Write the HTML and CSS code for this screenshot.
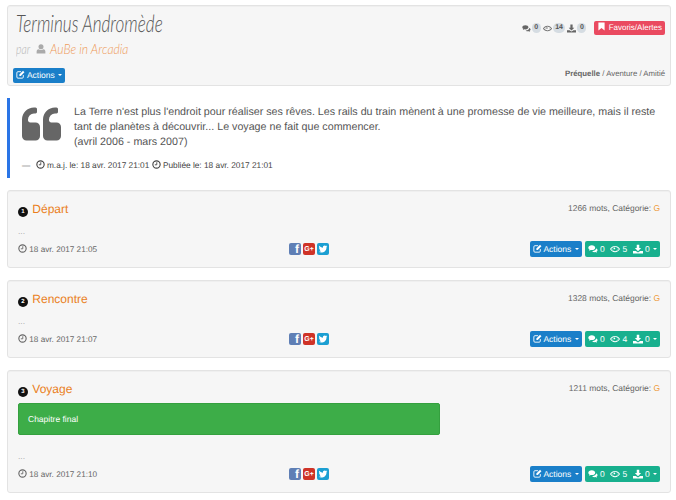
FILE: index.html
```html
<!DOCTYPE html>
<html lang="fr">

<head>
    <meta charset="UTF-8">
    <meta name="viewport" content="width=device-width, initial-scale=1.0">
    <title>Terminus Andromède</title>
    <link rel="stylesheet" href="styles.css">
</head>

<body>
    <!-- icones -->
    <svg class="sprite" xmlns="http://www.w3.org/2000/svg">
        <symbol id="i-edit" viewBox="0 0 16 16">
            <path d="M13 9v3.500a2 2 0 0 1-2 2H3.500a2 2 0 0 1-2-2V5a2 2 0 0 1 2-2H9" fill="none" stroke="currentColor" stroke-width="1.600" />
            <path d="M6 8l6.500-6.500 2.500 2.500L8.500 10.500H6z" fill="currentColor" />
        </symbol>
        <symbol id="i-comments" viewBox="0 0 16 16">
            <path d="M6 2C2.900 2 .5 3.700 .5 5.800c0 1.200.8 2.300 2 3-.2.700-.6 1.300-1 1.700 1 0 2-.4 2.800-1 .5.100 1.100.2 1.700.2 3.100 0 5.500-1.700 5.500-3.900S9.100 2 6 2z" fill="currentColor" />
            <path d="M13 6.500c.1 2.900-3 5.100-6.500 4.900.9 1 2.400 1.600 4 1.600.5 0 1-.1 1.400-.2.700.5 1.600.9 2.600.9-.4-.4-.7-.9-.9-1.500 1-.6 1.700-1.500 1.700-2.500 0-1.100-.9-2.100-2.300-2.700z" fill="currentColor" />
        </symbol>
        <symbol id="i-eye" viewBox="0 0 16 16">
            <path fill-rule="evenodd" d="M0 8c1.700-3 4.600-5 8-5s6.300 2 8 5c-1.700 3-4.600 5-8 5S1.700 11 0 8zm8-3.500a3.500 3.500 0 1 0 0 7 3.500 3.500 0 0 0 0-7zM1.800 8c1 1.400 2.200 2.400 3.500 3A4.800 4.800 0 0 1 5.300 5C4 5.600 2.800 6.600 1.800 8zm12.400 0c-1-1.400-2.200-2.400-3.500-3a4.800 4.800 0 0 1 0 6c1.300-.6 2.500-1.600 3.500-3z" fill="currentColor" />
            <circle cx="7" cy="7" r="1.400" fill="currentColor" />
        </symbol>
        <symbol id="i-download" viewBox="0 0 16 16">
            <path d="M6 1h4v5.500h3L8 11.500 3 6.500h3z" fill="currentColor" />
            <path d="M0 11h4.500L8 13.500 11.500 11H16v4H0z" fill="currentColor" />
        </symbol>
        <symbol id="i-user" viewBox="0 0 16 16">
            <circle cx="8" cy="4.500" r="4" fill="currentColor" />
            <path d="M1 15v-3c0-2 1.200-3.500 3-3.800 1 .9 2.500 1.300 4 1.300s3-.4 4-1.300c1.800.3 3 1.800 3 3.800v3z" fill="currentColor" />
        </symbol>
        <symbol id="i-bookmark" viewBox="0 0 16 16">
            <path d="M2.500 1h11v14L8 10.500 2.500 15z" fill="currentColor" />
        </symbol>
        <symbol id="i-clock" viewBox="0 0 16 16">
            <circle cx="8" cy="8" r="6.500" fill="none" stroke="currentColor" stroke-width="2" />
            <path d="M8.500 4v4.500H5" fill="none" stroke="currentColor" stroke-width="1.600" />
        </symbol>
        <symbol id="i-quote" viewBox="0 0 1664 1408">
            <path d="M768 832v384q0 80-56 136t-136 56h-384q-80 0-136-56t-56-136v-704q0-104 40.500-198.500t109.500-163.500 163.500-109.500 198.500-40.500h64q26 0 45 19t19 45v128q0 26-19 45t-45 19h-64q-106 0-181 75t-75 181v32q0 40 28 68t68 28h224q80 0 136 56t56 136zm896 0v384q0 80-56 136t-136 56h-384q-80 0-136-56t-56-136v-704q0-104 40.500-198.500t109.500-163.500 163.500-109.500 198.500-40.500h64q26 0 45 19t19 45v128q0 26-19 45t-45 19h-64q-106 0-181 75t-75 181v32q0 40 28 68t68 28h224q80 0 136 56t56 136z" fill="currentColor" />
        </symbol>
        <symbol id="i-twitter" viewBox="0 0 1792 1792">
            <path d="M1684 408q-67 98-162 167 1 14 1 42 0 130-38 259.500t-115.500 248.500-184.500 210.500-258 146-323 54.500q-271 0-496-145 35 4 78 4 225 0 401-138-105-2-188-64.500t-114-159.500q33 5 61 5 43 0 85-11-112-23-185.500-111.500t-73.500-205.500v-4q68 38 146 41-66-44-105-115t-39-154q0-88 44-163 121 149 294.500 238.500t371.500 99.500q-8-38-8-74 0-134 94.500-228.500t228.500-94.500q140 0 236 102 109-21 205-78-37 115-142 181 91-10 182-49z" fill="currentColor" />
        </symbol>
    </svg>

    <div class="page">
        <!-- en-tete de l'histoire -->
        <div class="well story-head">
            <div class="story-left">
                <div class="story-title"><span class="hand">Terminus Andromède</span></div>
                <div class="story-author"><span class="hand par">par</span> <svg class="ico author-ico"><use href="#i-user" /></svg> <a class="hand author-link">AuBe in Arcadia</a></div>
                <button class="btn btn-blue btn-head"><svg class="ico"><use href="#i-edit" /></svg> Actions <span class="caret"></span></button>
            </div>
            <div class="story-right">
                <div class="stats">
                    <svg class="ico"><use href="#i-comments" /></svg><span class="badge">0</span>
                    <svg class="ico"><use href="#i-eye" /></svg><span class="badge">14</span>
                    <svg class="ico"><use href="#i-download" /></svg><span class="badge">0</span>
                    <button class="btn btn-red"><svg class="ico"><use href="#i-bookmark" /></svg> Favoris/Alertes</button>
                </div>
                <div class="tags"><b>Préquelle</b> / Aventure / Amitié</div>
            </div>
        </div>

        <!-- resume -->
        <blockquote class="summary">
            <div class="summary-body">
                <svg class="quote-ico"><use href="#i-quote" /></svg>
                <p class="summary-text">La Terre n'est plus l'endroit pour réaliser ses rêves. Les rails du train mènent à une promesse de vie meilleure, mais il reste tant de planètes à découvrir... Le voyage ne fait que commencer.<br>(avril 2006 - mars 2007)</p>
            </div>
            <div class="summary-foot"><span class="dash">—</span> <svg class="ico"><use href="#i-clock" /></svg> m.a.j. le: 18 avr. 2017 21:01 <svg class="ico"><use href="#i-clock" /></svg> Publiée le: 18 avr. 2017 21:01</div>
        </blockquote>

        <!-- chapitres -->
        <div class="well chapter">
            <div class="chapter-head">
                <h3 class="chapter-title"><span class="num">1</span> Départ</h3>
                <div class="chapter-meta">1266 mots, Catégorie: <a class="cat">G</a></div>
            </div>
            <div class="excerpt">...</div>
            <div class="chapter-foot">
                <div class="date"><svg class="ico"><use href="#i-clock" /></svg> 18 avr. 2017 21:05</div>
                <div class="social">
                    <span class="soc soc-fb">f</span><span class="soc soc-gp">G+</span><span class="soc soc-tw"><svg class="ico-tw"><use href="#i-twitter" /></svg></span>
                </div>
                <div class="actions">
                    <button class="btn btn-blue"><svg class="ico"><use href="#i-edit" /></svg> Actions <span class="caret"></span></button>
                    <button class="btn btn-teal"><svg class="ico-lg"><use href="#i-comments" /></svg> 0 <svg class="ico-lg ico-gap"><use href="#i-eye" /></svg> 5 <svg class="ico-lg ico-gap"><use href="#i-download" /></svg> 0 <span class="caret"></span></button>
                </div>
            </div>
        </div>

        <div class="well chapter">
            <div class="chapter-head">
                <h3 class="chapter-title"><span class="num">2</span> Rencontre</h3>
                <div class="chapter-meta">1328 mots, Catégorie: <a class="cat">G</a></div>
            </div>
            <div class="excerpt">...</div>
            <div class="chapter-foot">
                <div class="date"><svg class="ico"><use href="#i-clock" /></svg> 18 avr. 2017 21:07</div>
                <div class="social">
                    <span class="soc soc-fb">f</span><span class="soc soc-gp">G+</span><span class="soc soc-tw"><svg class="ico-tw"><use href="#i-twitter" /></svg></span>
                </div>
                <div class="actions">
                    <button class="btn btn-blue"><svg class="ico"><use href="#i-edit" /></svg> Actions <span class="caret"></span></button>
                    <button class="btn btn-teal"><svg class="ico-lg"><use href="#i-comments" /></svg> 0 <svg class="ico-lg ico-gap"><use href="#i-eye" /></svg> 4 <svg class="ico-lg ico-gap"><use href="#i-download" /></svg> 0 <span class="caret"></span></button>
                </div>
            </div>
        </div>

        <div class="well chapter">
            <div class="chapter-head">
                <h3 class="chapter-title"><span class="num">3</span> Voyage</h3>
                <div class="chapter-meta">1211 mots, Catégorie: <a class="cat">G</a></div>
            </div>
            <div class="alert-final">Chapitre final</div>
            <div class="excerpt">...</div>
            <div class="chapter-foot">
                <div class="date"><svg class="ico"><use href="#i-clock" /></svg> 18 avr. 2017 21:10</div>
                <div class="social">
                    <span class="soc soc-fb">f</span><span class="soc soc-gp">G+</span><span class="soc soc-tw"><svg class="ico-tw"><use href="#i-twitter" /></svg></span>
                </div>
                <div class="actions">
                    <button class="btn btn-blue"><svg class="ico"><use href="#i-edit" /></svg> Actions <span class="caret"></span></button>
                    <button class="btn btn-teal"><svg class="ico-lg"><use href="#i-comments" /></svg> 0 <svg class="ico-lg ico-gap"><use href="#i-eye" /></svg> 5 <svg class="ico-lg ico-gap"><use href="#i-download" /></svg> 0 <span class="caret"></span></button>
                </div>
            </div>
        </div>
    </div>
</body>

</html>
```

FILE: styles.css
```css
/* base */
body {
    margin: 0;
    background-color: #fff;
    color: #666;
    font-family: "Liberation Sans", Arial, sans-serif;
    font-size: 8.500px;
    text-rendering: geometricPrecision;
    overflow: hidden;
}

.sprite {
    display: none;
}

.page {
    padding: 5px 5px 0 7px;
}

.ico {
    width: 9px;
    height: 9px;
    vertical-align: -1px;
}

.ico-lg {
    width: 10px;
    height: 10px;
    vertical-align: -2px;
}

/* cartes */
.well {
    box-sizing: border-box;
    background-color: #f6f6f6;
    border: 1px solid #e3e3e3;
    border-radius: 3px;
    box-shadow: inset 0 1px 1px rgba(0, 0, 0, 0.03);
}

/* boutons */
.btn {
    display: inline-block;
    box-sizing: border-box;
    height: 16px;
    padding: 0 2px;
    border: 1px solid transparent;
    border-radius: 2px;
    color: #fff;
    font-family: inherit;
    font-size: 8.500px;
    text-rendering: inherit;
    line-height: 14px;
    white-space: nowrap;
}

.btn-blue {
    background-color: #1a7fc9;
}

.btn-teal {
    background-color: #18b08e;
}

.btn-red {
    height: 14px;
    line-height: 12px;
    padding: 0 2px;
    background-color: #ea4a60;
    font-size: 8px;
    margin-left: 6px;
}

.caret {
    display: inline-block;
    width: 0;
    height: 0;
    margin-left: 1px;
    vertical-align: 2px;
    border-top: 2px solid #fff;
    border-left: 2px solid transparent;
    border-right: 2px solid transparent;
}

/* en-tete */
.story-head {
    display: flex;
    justify-content: space-between;
    height: 81px;
    padding: 3px 5px 4px 5px;
    margin-bottom: 12px;
}

.hand {
    display: inline-block;
    transform-origin: left center;
    font-family: Lato, sans-serif;
    font-style: italic;
    font-weight: 300;
}

.story-title {
    margin-left: 3px;
    font-size: 24px;
    line-height: 29px;
    white-space: nowrap;
    color: #555;
}

.story-title .hand {
    transform: scaleX(0.715);
}

.story-author {
    margin: 1px 0 0 3px;
    font-size: 14px;
    line-height: 17px;
    white-space: nowrap;
    color: #b5b5b5;
}

.par {
    transform: scaleX(0.75);
    margin-right: -3px;
}

.author-ico {
    width: 10px;
    height: 10px;
    vertical-align: 0;
    color: #aaa;
}

.author-link {
    transform: scaleX(0.87);
    color: #ee9a5a;
}

.btn-head {
    display: block;
    height: 15px;
    line-height: 13px;
    margin-top: 10px;
}

.story-right {
    display: flex;
    flex-direction: column;
    align-items: flex-end;
    justify-content: space-between;
}

.stats {
    display: flex;
    align-items: center;
    gap: 1px;
    padding-top: 12px;
}

.badge {
    min-width: 4px;
    padding: 1px 2.500px;
    border-radius: 6px;
    background-color: #d5dce2;
    color: #555;
    font-size: 7px;
    font-weight: bold;
    line-height: 8px;
    text-align: center;
    margin-right: 1px;
}

.tags {
    font-size: 7.800px;
    line-height: 12px;
    padding-bottom: 1px;
}

/* resume */
.summary {
    box-sizing: border-box;
    height: 80px;
    margin: 0 0 12px;
    border-left: 3px solid #2a75e6;
    padding: 7px 0 0 12px;
}

.summary-body {
    display: flex;
    gap: 13px;
}

.quote-ico {
    flex: none;
    width: 39px;
    height: 34px;
    margin-top: 2px;
    color: #666;
}

.summary-text {
    margin: 0;
    font-size: 10.700px;
    line-height: 15px;
    color: #555;
}

.summary-foot {
    margin-top: 9px;
    font-size: 8.300px;
    line-height: 12px;
    color: #444;
}

.dash {
    margin-right: 3px;
}

/* chapitres */
.chapter {
    padding: 10px;
    margin-bottom: 12px;
}

.chapter-head {
    display: flex;
    justify-content: space-between;
    height: 16px;
}

.chapter-title {
    margin: 0;
    font-size: 12px;
    font-weight: normal;
    line-height: 17px;
    color: #ea7f1c;
}

.num {
    display: inline-block;
    width: 10px;
    height: 10px;
    border-radius: 50%;
    background-color: #111;
    color: #fff;
    font-size: 6px;
    font-weight: bold;
    line-height: 10px;
    text-align: center;
    vertical-align: 0;
    margin-right: 1px;
}

.chapter-meta {
    font-size: 8.450px;
    line-height: 14px;
}

.cat {
    color: #ee9a3a;
}

.excerpt {
    margin-top: 8px;
    line-height: 12px;
    color: #aaa;
}

.alert-final {
    box-sizing: border-box;
    width: 422px;
    height: 32px;
    margin: 6px 0 15px;
    padding-left: 9px;
    background-color: #3dad48;
    border: 1px solid #35a03f;
    border-radius: 2px;
    color: #fff;
    line-height: 30px;
}

.alert-final + .excerpt {
    margin-top: 0;
}

.chapter-foot {
    display: grid;
    grid-template-columns: 271px auto 1fr;
    align-items: center;
    height: 16px;
    margin-top: 4px;
}

.date {
    font-size: 8.200px;
}

.social {
    display: flex;
    gap: 2px;
}

.soc {
    display: flex;
    align-items: center;
    justify-content: center;
    width: 12px;
    height: 12px;
    border-radius: 2px;
    color: #fff;
    font-weight: bold;
    overflow: hidden;
}

.soc-fb {
    box-sizing: border-box;
    align-items: flex-end;
    justify-content: flex-end;
    padding-right: 2px;
    background-color: #5f7fb5;
    font-size: 12px;
    line-height: 11px;
}

.soc-gp {
    background-color: #cf3327;
    font-size: 7px;
}

.soc-tw {
    background-color: #1c9fd2;
}

.ico-tw {
    width: 10px;
    height: 10px;
}

.actions {
    display: flex;
    justify-content: flex-end;
    gap: 3px;
}

.ico-gap {
    margin-left: 3px;
}
```
